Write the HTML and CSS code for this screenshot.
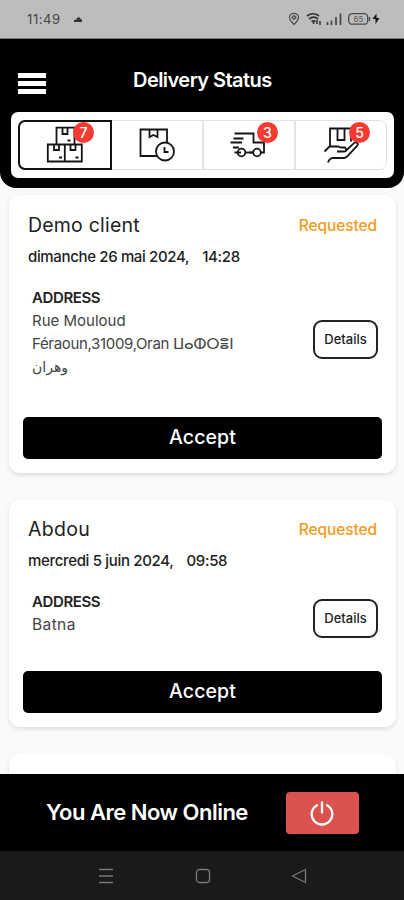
FILE: index.html
```html
<!DOCTYPE html>
<html lang="en">
<head>
<meta charset="utf-8">
<title>Delivery Status</title>
<link rel="stylesheet" href="styles.css">
</head>
<body>
<div class="phone">
  <div class="statusbar">
    <span class="clock">11:49</span>
    <svg class="weather" width="10" height="8" viewBox="0 0 10 8"><path d="M1 1v6h8V5.500C9 4 8 4 7.500 4 7 1.500 4 1.500 3.500 4.500L1 5" fill="#333"/></svg>
    <svg class="sys" width="92" height="14" viewBox="0 0 92 14" fill="none" stroke="#4a4a4a">
      <path d="M6 12.500C3.500 10 1.500 8 1.500 5.500a4.500 4.200 0 0 1 9 0C10.500 8 8.500 10 6 12.500z" stroke-width="1.200"/>
      <path d="M6 3.500L8 5.500 6 7.500 4 5.500z" stroke-width="1.200"/>
      <path d="M19 4c4-3 8-3 12 0M21 7c3-2.400 6-2.400 9 0M23.500 9.500c1.500-1 2.500-1 4 0" stroke="#333" stroke-width="1.700"/>
      <path d="M25.500 10v2M29 8v4M32 9v4" stroke="#333" stroke-width="1.500"/>
      <path d="M39.500 10v3M43.500 8.500V13M48 5v8M52.500 1.500V13" stroke="#444" stroke-width="1.700"/>
      <rect x="60.700" y="1.700" width="19" height="10.500" rx="3.500" stroke-width="1.300"/>
      <path d="M81.500 5v4" stroke-width="1.500"/>
      <text x="65.500" y="9.600" class="battery">65</text>
      <path d="M88.500 1.500L84.500 7h3v5l4-6h-3z" fill="#111" stroke="none"/>
    </svg>
  </div>

  <header class="header">
    <div class="titlebar">
      <div class="menu"><i></i><i></i><i></i></div>
      <h1>Delivery Status</h1>
    </div>
    <div class="tabs">
      <div class="track">
        <div class="tab active">
          <svg width="38" height="38" viewBox="0 0 38 38">
            <path d="M10.500 18V1.700h18V18M1.800 18.500h17v17h-17zM18.800 18.500h17v17h-17zM16.500 2v6h5V2M8 19v5h5v-5M24.500 19v5h5v-5M21.500 14.500h3M13 31.500h3M29.500 31.500h3"/>
          </svg>
          <b class="badge">7</b>
        </div>
        <div class="tab">
          <svg width="38" height="38" viewBox="0 0 38 38">
            <path d="M20 30H2.500V3.500H29v14M11.500 3.500V11l4-2 4 2V3.500"/>
            <circle cx="27" cy="25.500" r="9" fill="#fff"/>
            <path d="M26.500 21v5h4"/>
          </svg>
        </div>
        <div class="tab">
          <svg width="38" height="38" viewBox="0 0 38 38">
            <path d="M4.500 7.500H23.500v9h10.500v10h-3M19.500 26.500h4M11 26.500h-6.500M3.500 12.500h10M.5 16.500h11.500M3 21.500h6"/>
            <circle cx="11.500" cy="26.500" r="3.800"/><circle cx="27" cy="26.500" r="3.800"/><path d="M15.500 26.500h7.500"/>
          </svg>
          <b class="badge">3</b>
        </div>
        <div class="tab">
          <svg width="38" height="38" viewBox="0 0 38 38">
            <path d="M8 20V2.500h21v13M15.500 3v11h7V3M2.500 25.500l5-5H16l3 1h4q3 4-1 4h-7M23.500 25l9-8.300c2.500-1 4.300 1 2.800 3L25 30.500q-1.500 1.500-3 1.500H10q-3 1-4 4.500"/>
          </svg>
          <b class="badge">5</b>
        </div>
      </div>
    </div>
  </header>

  <main class="list">
    <article class="card">
      <div class="top"><h2 class="n1">Demo client</h2><span class="state">Requested</span></div>
      <p class="date d1">dimanche 26 mai 2024,<span class="time">14:28</span></p>
      <div class="info tall">
        <div class="address">
          <h3>ADDRESS</h3>
          <p class="l1">Rue Mouloud</p>
          <p class="l2">Féraoun,31009,Oran <span class="tif">ⵡⴰⵀⵔⴻⵏ</span></p>
          <p class="arabic">وهران</p>
        </div>
        <button class="details">Details</button>
      </div>
      <button class="accept">Accept</button>
    </article>
    <article class="card second">
      <div class="top"><h2 class="n2">Abdou</h2><span class="state">Requested</span></div>
      <p class="date d2">mercredi 5 juin 2024,<span class="time">09:58</span></p>
      <div class="info">
        <div class="address">
          <h3>ADDRESS</h3>
          <p class="l3">Batna</p>
        </div>
        <button class="details">Details</button>
      </div>
      <button class="accept">Accept</button>
    </article>
    <article class="card"></article>
  </main>

  <footer class="online">
    <strong>You Are Now Online</strong>
    <button class="power">
      <svg width="26" height="26" viewBox="0 0 26 26" fill="none" stroke="#fff" stroke-width="2.300" stroke-linecap="round"><path d="M12 2.500v10M7 5.200a10.300 10.300 0 1 0 10 0"/></svg>
    </button>
  </footer>
  <nav class="navbar">
    <svg width="16" height="16" viewBox="0 0 16 16"><path d="M1 1.500h14M1 8h14M1 14.500h14"/></svg>
    <svg width="16" height="16" viewBox="0 0 16 16"><rect x="1.500" y="1.500" width="13" height="13" rx="3"/></svg>
    <svg width="16" height="16" viewBox="0 0 16 16"><path d="M14.500 1.500v13L1.500 8z" stroke-linejoin="round"/></svg>
  </nav>
</div>
</body>
</html>
```
FILE: styles.css
```css
* { box-sizing: border-box; margin: 0; padding: 0; }
body { width: 404px; height: 900px; overflow: hidden; background: #fafafa; font-family: Inter, "DejaVu Sans", sans-serif; color: #222; }
button { font-family: inherit; border: 0; }
svg { display: block; }
.phone { height: 900px; display: flex; flex-direction: column; }
.statusbar { height: 39px; flex: none; background: #bdbdbd; border-bottom: 1px solid #777; display: flex; align-items: center; padding: 0 24px 0 27px; }
.clock { font-size: 13px; letter-spacing: 0.6px; color: #444; width: 46px; }
.sys { margin-left: auto; }
.battery { font-size: 8px; fill: #555; stroke: none; }
.header { height: 149px; flex: none; background: #000; border-radius: 0 0 16px 16px; padding: 0 10px 0 11px; }
.titlebar { height: 73px; display: flex; align-items: center; padding-left: 7px; }
.menu { width: 28px; display: flex; flex-direction: column; gap: 3px; margin-top: 15px; }
.menu i { height: 5px; background: #fff; }
.titlebar h1 { color: #fff; font-size: 20px; font-weight: 600; letter-spacing: -0.55px; margin: 8px 0 0 87px; white-space: nowrap; }
.tabs { height: 66px; background: #fff; border-radius: 7px; padding: 8px 7px; }
.track { height: 50px; display: grid; grid-template-columns: 92px 93px 92px 1fr; border: 1px solid #e2e2e2; border-radius: 7px; }
.tab { position: relative; display: flex; align-items: center; justify-content: center; border-right: 2px solid #e4e4e4; }
.tab:last-child { border: 0; }
.tab.active { margin: -1px; border: 2px solid #111; border-radius: 7px 0 0 7px; }
.tab svg { fill: none; stroke: #151515; stroke-width: 1.8; }
.badge { position: absolute; right: 16px; top: 1px; width: 21px; height: 21px; border-radius: 50%; background: #f43b31; color: #fff; font: 500 14px/21px Inter, sans-serif; text-align: center; }
.active .badge { top: 0; }
.list { flex: 1; overflow: hidden; padding: 7px 8px 0 9px; display: flex; flex-direction: column; gap: 27px; }
.card { flex: none; background: #fff; border-radius: 11px; box-shadow: 0 2px 4px rgba(0,0,0,.12); padding: 15px 14px 14px; min-height: 100px; }
.top { display: flex; justify-content: space-between; height: 31px; line-height: 31px; padding: 0 5px; white-space: nowrap; }
.top h2 { font-size: 19.5px; font-weight: 400; }
.top .n1 { letter-spacing: 0.2px; }
.top .n2 { letter-spacing: 0.3px; }
.state { color: #f39a20; font-size: 15.500px; font-weight: 500; letter-spacing: -0.1px; }
.date { height: 32px; line-height: 32px; padding-left: 5px; font-size: 15px; font-weight: 500; white-space: nowrap; }
.d1 { letter-spacing: -0.35px; }
.d2 { letter-spacing: -0.33px; }
.time { margin-left: 13px; }
.info { display: flex; justify-content: space-between; align-items: flex-start; padding: 13px 4px 0 9px; height: 79px; }
.address h3 { font-size: 15px; font-weight: 600; line-height: 23px; letter-spacing: -0.4px; }
.address p { font-size: 15px; line-height: 23px; white-space: nowrap; color: #444; }
.address .l2 { letter-spacing: -0.33px; }
.address .l3 { font-size: 15.5px; letter-spacing: 0.4px; }
.address .arabic { font-size: 14px; }
.info .details { margin-top: 9px; }
.info.tall { height: 129px; }
.info.tall .details { margin-top: 34px; }
.details { width: 65px; height: 39px; flex: none; border: 2px solid #222; border-radius: 9px; background: #fff; color: #222; font-size: 13px; font-weight: 500; padding-bottom: 2px; }
.second { padding-top: 14px; }
.accept { display: block; width: 359px; height: 42px; margin-top: 15px; border-radius: 5px; background: #000; color: #fff; font-size: 19.500px; font-weight: 500; letter-spacing: 0.1px; padding-bottom: 2px; }
.online { height: 77px; flex: none; background: #000; display: flex; align-items: center; padding: 0 45px 0 46px; justify-content: space-between; }
.online strong { color: #fff; font-size: 22px; font-weight: 600; letter-spacing: -0.5px; white-space: nowrap; padding-bottom: 2px; }
.power { width: 73px; height: 42px; border-radius: 4px; background: #db524e; display: flex; align-items: center; justify-content: center; }
.navbar { height: 49px; flex: none; background: #1a1a1a; display: flex; justify-content: space-between; align-items: center; padding: 0 97px 0 98px; }
.navbar svg { fill: none; stroke: #777; stroke-width: 1.3; }
```
